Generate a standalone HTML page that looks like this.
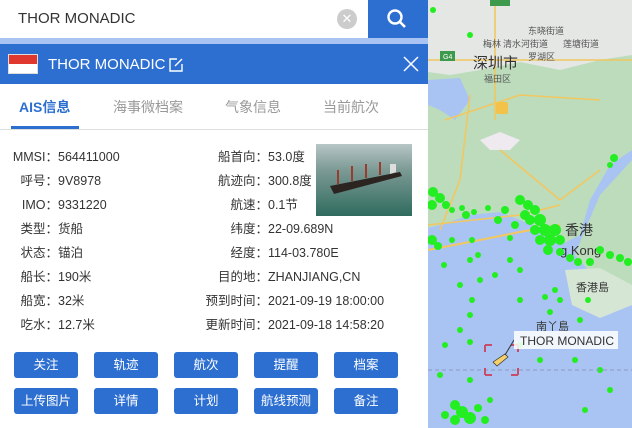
<!DOCTYPE html>
<html><head><meta charset="utf-8"><style>
*{margin:0;padding:0;box-sizing:border-box}
body{width:632px;height:428px;overflow:hidden;position:relative;font-family:"Liberation Sans","Noto Sans CJK SC",sans-serif;background:#a9c4f2}
.abs{position:absolute}
.lbl{position:absolute;text-align:right;font-size:12.5px;line-height:16px;height:16px;color:#333;white-space:nowrap}
.val{position:absolute;font-size:12.5px;line-height:16px;height:16px;color:#333;white-space:nowrap}
.btn{position:absolute;width:64px;height:26px;background:#2d6fd1;color:#fff;font-size:12.5px;text-align:center;line-height:26px;border-radius:3px}
</style></head><body>
<svg class="abs" style="left:0;top:0" width="632" height="428">
<rect width="632" height="428" fill="#a9c4f2"/>
<path d="M428 0H632V150L610 165 590 200 580 235 560 245 540 228 500 212 470 215 440 225 428 228Z" fill="#bcdcbc"/>
<path d="M428 0H632V55L600 60 560 70 520 62 480 70 450 75 428 72Z" fill="#e4e7e4"/>
<path d="M632 160V300L610 292 590 272 575 255 585 230 600 195Z" fill="#bcdcbc"/>
<path d="M565 270 600 268 632 285 632 305 600 318 572 305Z" fill="#d6e6d4"/>
<path d="M428 80 460 78 470 100 455 120 440 110 428 105Z" fill="#a9c4f2"/>
<path d="M480 140 500 132 520 140 510 150 490 150Z" fill="#eeeaf0"/>
<path d="M428 60H632M495 0V120M445 120 520 95 600 100M470 95 460 180 440 230M500 150 560 200 600 170M428 225 520 215 560 205" stroke="#f2c760" stroke-width="1.6" fill="none"/>
<path d="M428 250 480 240 520 232 560 225" stroke="#f2c760" stroke-width="2" fill="none"/>
<rect x="490" y="0" width="20" height="6" fill="#3d9a4c"/>
<rect x="440" y="51" width="15" height="10" fill="#3d9a4c"/>
<text x="443" y="59" font-size="7" fill="#fff" font-family="Liberation Sans">G4</text>
<rect x="496" y="102" width="12" height="12" rx="2" fill="#f2c24a"/>
<text x="473" y="68" font-size="15" fill="#333" font-family="Noto Sans CJK SC">深圳市</text>
<text x="483" y="47" font-size="9" fill="#555" font-family="Noto Sans CJK SC">梅林 清水河街道</text>
<text x="563" y="47" font-size="9" fill="#555" font-family="Noto Sans CJK SC">莲塘街道</text>
<text x="528" y="60" font-size="9" fill="#555" font-family="Noto Sans CJK SC">罗湖区</text>
<text x="528" y="34" font-size="9" fill="#555" font-family="Noto Sans CJK SC">东晓街道</text>
<text x="484" y="82" font-size="9" fill="#555" font-family="Noto Sans CJK SC">福田区</text>
<text x="565" y="235" font-size="14" fill="#333" font-family="Noto Sans CJK SC">香港</text>
<text x="560" y="255" font-size="13" fill="#333" font-family="Liberation Sans">g Kong</text>
<text x="576" y="291" font-size="11" fill="#333" font-family="Noto Sans CJK SC">香港島</text>
<text x="536" y="330" font-size="11" fill="#333" font-family="Noto Sans CJK SC">南丫島</text>
<g fill="#22ee22">
<circle cx="433" cy="192" r="5"/><circle cx="440" cy="198" r="5"/><circle cx="446" cy="205" r="4"/><circle cx="432" cy="205" r="5"/><circle cx="452" cy="210" r="3"/><circle cx="462" cy="208" r="3"/>
<circle cx="432" cy="240" r="5"/><circle cx="438" cy="246" r="4"/><circle cx="452" cy="240" r="3"/>
<circle cx="520" cy="200" r="5"/><circle cx="528" cy="205" r="5"/><circle cx="535" cy="210" r="5"/><circle cx="525" cy="215" r="5"/><circle cx="540" cy="220" r="6"/><circle cx="545" cy="230" r="6"/><circle cx="550" cy="240" r="6"/><circle cx="555" cy="230" r="6"/><circle cx="560" cy="240" r="5"/><circle cx="540" cy="240" r="5"/><circle cx="535" cy="230" r="5"/><circle cx="530" cy="220" r="5"/><circle cx="548" cy="250" r="5"/><circle cx="560" cy="252" r="4"/><circle cx="570" cy="258" r="4"/><circle cx="578" cy="262" r="4"/><circle cx="590" cy="262" r="4"/><circle cx="600" cy="250" r="4"/><circle cx="610" cy="255" r="4"/><circle cx="620" cy="258" r="4"/><circle cx="628" cy="262" r="4"/><circle cx="515" cy="225" r="4"/><circle cx="510" cy="238" r="3"/><circle cx="505" cy="210" r="4"/><circle cx="498" cy="220" r="4"/>
<circle cx="466" cy="215" r="4"/><circle cx="474" cy="212" r="3"/><circle cx="488" cy="208" r="3"/>
<circle cx="472" cy="240" r="3"/><circle cx="470" cy="260" r="3"/><circle cx="478" cy="255" r="3"/>
<circle cx="433" cy="10" r="3"/><circle cx="470" cy="35" r="3"/><circle cx="510" cy="260" r="3"/><circle cx="545" cy="297" r="3"/><circle cx="555" cy="290" r="3"/><circle cx="550" cy="312" r="3"/><circle cx="470" cy="315" r="3"/><circle cx="472" cy="300" r="3"/><circle cx="445" cy="345" r="3"/><circle cx="440" cy="375" r="3"/><circle cx="470" cy="342" r="3"/><circle cx="495" cy="275" r="3"/><circle cx="520" cy="300" r="3"/><circle cx="580" cy="320" r="3"/><circle cx="600" cy="370" r="3"/><circle cx="610" cy="390" r="3"/><circle cx="585" cy="410" r="3"/><circle cx="575" cy="360" r="3"/><circle cx="540" cy="360" r="3"/><circle cx="520" cy="345" r="3"/><circle cx="470" cy="380" r="3"/><circle cx="614" cy="158" r="4"/><circle cx="610" cy="165" r="3"/><circle cx="460" cy="330" r="3"/><circle cx="520" cy="270" r="3"/><circle cx="560" cy="300" r="3"/><circle cx="588" cy="300" r="3"/><circle cx="480" cy="280" r="3"/><circle cx="460" cy="285" r="3"/><circle cx="444" cy="265" r="3"/>
<circle cx="455" cy="405" r="5"/><circle cx="462" cy="412" r="6"/><circle cx="470" cy="418" r="6"/><circle cx="455" cy="420" r="5"/><circle cx="478" cy="408" r="4"/><circle cx="485" cy="420" r="4"/><circle cx="445" cy="415" r="4"/><circle cx="490" cy="400" r="3"/>
</g>
<path d="M428 370H632" stroke="#8c9cc0" stroke-dasharray="4 3" stroke-width="1"/>
<path d="M485 345V352M485 345H492M518 345H511M518 345V352M485 375V368M485 375H492M518 375H511M518 375V368" stroke="#c84d6a" stroke-width="2" fill="none"/>
<path d="M493 362 505 354 508 357 497 366Z" fill="#f3d06a" stroke="#333" stroke-width="0.7"/>
<path d="M505 355 514 340" stroke="#333"/>
<rect x="514" y="331" width="104" height="18" fill="rgba(255,255,255,0.85)"/>
<text x="520" y="345" font-size="12" fill="#333" font-family="Liberation Sans">THOR MONADIC</text>
</svg>
<div class="abs" style="left:0;top:0;width:368px;height:38px;background:#fff"></div>
<div class="abs" style="left:18px;top:10px;font-size:15px;color:#333">THOR MONADIC</div>
<div class="abs" style="left:337px;top:9px;width:20px;height:20px;border-radius:50%;background:#ccc;color:#fff;font-size:13px;text-align:center;line-height:20px">✕</div>
<div class="abs" style="left:368px;top:0;width:60px;height:38px;background:#2d6fd1"></div>
<svg class="abs" style="left:386px;top:8px" width="22" height="22"><circle cx="9" cy="9" r="6.5" stroke="#fff" stroke-width="2.4" fill="none"/><path d="M14 14 19 19" stroke="#fff" stroke-width="2.6"/></svg>
<div class="abs" style="left:0;top:44px;width:428px;height:384px;background:#fff"></div>
<div class="abs" style="left:0;top:44px;width:428px;height:40px;background:#2d6fd1"></div>
<div class="abs" style="left:8px;top:54px;width:30px;height:20px;background:#fff;border:1px solid #ddd"><div style="height:9px;background:#e0372f"></div></div>
<div class="abs" style="left:48px;top:56px;font-size:15px;color:#fff">THOR MONADIC</div>
<svg class="abs" style="left:168px;top:57px" width="16" height="16"><path d="M9 2H2V14H14V7" stroke="#fff" stroke-width="1.4" fill="none"/><path d="M7 9 14 2" stroke="#fff" stroke-width="1.4"/></svg>
<svg class="abs" style="left:402px;top:55px" width="18" height="18"><path d="M2 2 16 16M16 2 2 16" stroke="#fff" stroke-width="1.5"/></svg>
<div class="abs" style="left:19px;top:97px;font-size:14px;color:#2d6fd1;font-weight:bold">AIS信息</div>
<div class="abs" style="left:113px;top:97px;font-size:14px;color:#999">海事微档案</div>
<div class="abs" style="left:225px;top:97px;font-size:14px;color:#999">气象信息</div>
<div class="abs" style="left:323px;top:97px;font-size:14px;color:#999">当前航次</div>
<div class="abs" style="left:11px;top:126px;width:68px;height:3px;background:#2d6fd1"></div>
<div class="abs" style="left:0;top:129px;width:428px;height:1px;background:#ddd"></div>
<div class="lbl" style="right:574px;top:149px">MMSI：</div><div class="val" style="left:58px;top:149px">564411000</div>
<div class="lbl" style="right:574px;top:173px">呼号：</div><div class="val" style="left:58px;top:173px">9V8978</div>
<div class="lbl" style="right:574px;top:197px">IMO：</div><div class="val" style="left:58px;top:197px">9331220</div>
<div class="lbl" style="right:574px;top:221px">类型：</div><div class="val" style="left:58px;top:221px">货船</div>
<div class="lbl" style="right:574px;top:245px">状态：</div><div class="val" style="left:58px;top:245px">锚泊</div>
<div class="lbl" style="right:574px;top:269px">船长：</div><div class="val" style="left:58px;top:269px">190米</div>
<div class="lbl" style="right:574px;top:293px">船宽：</div><div class="val" style="left:58px;top:293px">32米</div>
<div class="lbl" style="right:574px;top:317px">吃水：</div><div class="val" style="left:58px;top:317px">12.7米</div>
<div class="lbl" style="right:364px;top:149px">船首向：</div><div class="val" style="left:268px;top:149px">53.0度</div>
<div class="lbl" style="right:364px;top:173px">航迹向：</div><div class="val" style="left:268px;top:173px">300.8度</div>
<div class="lbl" style="right:364px;top:197px">航速：</div><div class="val" style="left:268px;top:197px">0.1节</div>
<div class="lbl" style="right:364px;top:221px">纬度：</div><div class="val" style="left:268px;top:221px">22-09.689N</div>
<div class="lbl" style="right:364px;top:245px">经度：</div><div class="val" style="left:268px;top:245px">114-03.780E</div>
<div class="lbl" style="right:364px;top:269px">目的地：</div><div class="val" style="left:268px;top:269px">ZHANJIANG,CN</div>
<div class="lbl" style="right:364px;top:293px">预到时间：</div><div class="val" style="left:268px;top:293px">2021-09-19 18:00:00</div>
<div class="lbl" style="right:364px;top:317px">更新时间：</div><div class="val" style="left:268px;top:317px">2021-09-18 14:58:20</div>
<svg class="abs" style="left:316px;top:144px" width="96" height="72"><defs><linearGradient id="g" x1="0" y1="0" x2="0" y2="1"><stop offset="0" stop-color="#b7c6c6"/><stop offset="0.35" stop-color="#7e9b96"/><stop offset="1" stop-color="#2f6b5e"/></linearGradient></defs><rect width="96" height="72" fill="url(#g)"/><path d="M14 42 L84 28 L86 32 L18 50Z" fill="#2b2420"/><path d="M22 40V26M36 37V22M50 34V20M64 31V18" stroke="#9a3b2e" stroke-width="2"/><path d="M74 30V20H80V28" fill="#ddd"/></svg>
<div class="btn" style="left:14px;top:352px">关注</div><div class="btn" style="left:94px;top:352px">轨迹</div><div class="btn" style="left:174px;top:352px">航次</div><div class="btn" style="left:254px;top:352px">提醒</div><div class="btn" style="left:334px;top:352px">档案</div>
<div class="btn" style="left:14px;top:388px">上传图片</div><div class="btn" style="left:94px;top:388px">详情</div><div class="btn" style="left:174px;top:388px">计划</div><div class="btn" style="left:254px;top:388px">航线预测</div><div class="btn" style="left:334px;top:388px">备注</div>
</body></html>
